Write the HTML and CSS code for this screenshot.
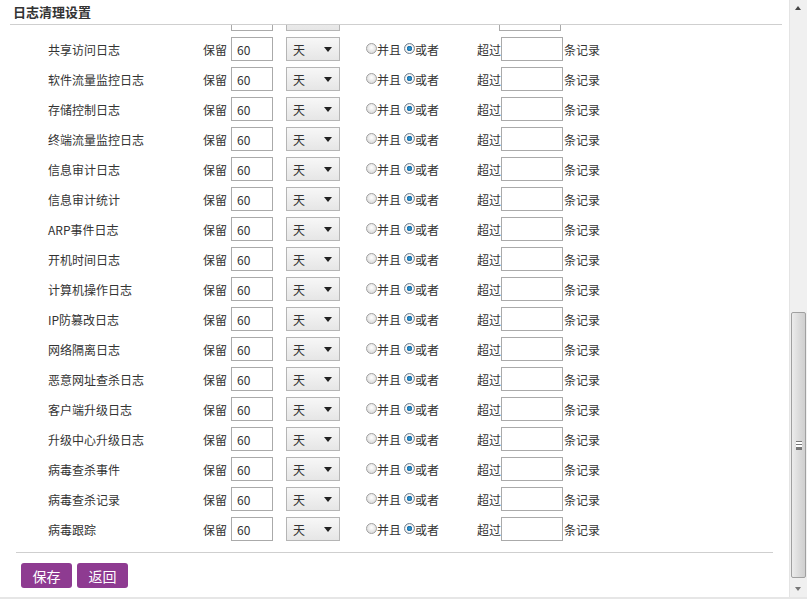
FILE: index.html
```html
<!DOCTYPE html>
<html lang="zh-CN">
<head>
    <meta charset="UTF-8">
    <title>日志清理设置</title>
    <link rel="stylesheet" href="styles.css">
</head>
<body>
    <div class="page">
        <div class="main">
            <div class="title">日志清理设置</div>
            <div class="list-box">
                <div class="list" id="logList">
                    <!-- 위로 스크롤되어 입력칸 아래쪽만 보이는 줄 -->
                    <div class="row scrolled">
                        <span class="name"></span>
                        <span class="keep"></span>
                        <input class="days" type="text">
                        <span class="unit"><select></select></span>
                        <span class="opt-space"></span>
                        <span class="over"></span>
                        <input class="count" type="text">
                    </div>
                </div>
            </div>
            <div class="divider"></div>
            <div class="actions">
                <button class="btn">保存</button>
                <button class="btn">返回</button>
            </div>
        </div>
        <div class="scrollbar">
            <div class="sb-btn sb-up"></div>
            <div class="sb-track">
                <div class="sb-thumb"><span class="grip"></span></div>
            </div>
            <div class="sb-btn sb-down"></div>
        </div>
    </div>

    <script>
        const logNames = [
            '共享访问日志',
            '软件流量监控日志',
            '存储控制日志',
            '终端流量监控日志',
            '信息审计日志',
            '信息审计统计',
            'ARP事件日志',
            '开机时间日志',
            '计算机操作日志',
            'IP防篡改日志',
            '网络隔离日志',
            '恶意网址查杀日志',
            '客户端升级日志',
            '升级中心升级日志',
            '病毒查杀事件',
            '病毒查杀记录',
            '病毒跟踪'
        ];
        const logList = document.getElementById('logList');

        logNames.forEach((name, i) => {
            const row = document.createElement('div');
            row.className = 'row';
            row.innerHTML = `
                <span class="name">${name}</span>
                <span class="keep">保留</span>
                <input class="days" type="text" value="60">
                <span class="unit"><select><option>天</option><option>月</option></select></span>
                <label class="opt"><input type="radio" name="mode${i}">并且</label>
                <label class="opt"><input type="radio" name="mode${i}" checked>或者</label>
                <span class="over">超过</span>
                <input class="count" type="text">
                <span class="suffix">条记录</span>`;
            logList.appendChild(row);
        });
    </script>
</body>
</html>
```

FILE: styles.css
```css
body {
    margin: 0;
    font-family: "Noto Sans CJK SC", "Liberation Sans", sans-serif;
    font-size: 12px;
    color: #333;
    background-color: #ffffff;
    overflow: hidden;
}
.page {
    display: flex;
    height: 597px;
    border-bottom: 2px solid #e6e6e6;
}
.main {
    flex: 1;
    display: flex;
    flex-direction: column;
    min-width: 0;
}
.title {
    height: 24px;
    line-height: 24px;
    margin: 0 7px 0 10px;
    padding-left: 3px;
    font-size: 13px;
    font-weight: bold;
    color: #333;
    border-bottom: 1px solid #cfcfcf;
}
.list-box {
    height: 519px;
    overflow: hidden;
}
.list {
    margin-top: -21px;
    padding-left: 48px;
}
.row {
    display: flex;
    align-items: center;
    height: 30px;
}
.opt-space {
    width: 74px;
}
.name {
    width: 155px;
}
.keep {
    width: 28px;
}
.row input[type="text"] {
    height: 24px;
    box-sizing: border-box;
    border: 1px solid #aaaaaa;
    font-family: inherit;
    font-size: 12px;
    color: #333;
    padding: 0 5px;
    outline: none;
}
.days {
    width: 42px;
    margin-right: 13px;
}
.unit {
    position: relative;
    width: 54px;
    height: 24px;
    margin-right: 26px;
}
.unit select {
    width: 54px;
    height: 24px;
    appearance: none;
    -webkit-appearance: none;
    border: 1px solid #b5b5b5;
    background: linear-gradient(#f7f7f7, #e6e6e6);
    font-family: inherit;
    font-size: 12px;
    color: #333;
    padding-left: 6px;
    outline: none;
}
.unit::after {
    content: "";
    position: absolute;
    top: 10px;
    left: 38px;
    border-left: 4px solid transparent;
    border-right: 4px solid transparent;
    border-top: 5px solid #222;
    pointer-events: none;
}
.scrolled .unit::after {
    display: none;
}
.opt {
    display: flex;
    align-items: center;
    margin-right: 3px;
}
.opt input {
    appearance: none;
    -webkit-appearance: none;
    width: 11px;
    height: 11px;
    margin: 0 0 2px 0;
    border-radius: 50%;
    border: 1px solid #a0a0a0;
    background: radial-gradient(circle at 50% 40%, #ffffff, #d0d0d0);
    box-sizing: border-box;
}
.opt input:checked {
    border-color: #6f7f8f;
    background: radial-gradient(circle, #2f9fd8 0, #1f6fa8 2.5px, #ffffff 3px, #d8d8d8 5px);
}
.over {
    margin-left: 35px;
    width: 24px;
}
.count {
    width: 62px;
}
.suffix {
    margin-left: 1px;
}
.divider {
    margin: 8px 16px 0 16px;
    width: 757px;
    border-top: 1px solid #cfcfcf;
}
.actions {
    display: flex;
    gap: 5px;
    padding: 10px 0 0 21px;
}
.btn {
    width: 51px;
    height: 25px;
    border: none;
    border-radius: 3px;
    background-color: #8e3b91;
    color: #ffffff;
    font-family: inherit;
    font-size: 14px;
    padding: 0;
    cursor: pointer;
}
.scrollbar {
    width: 17px;
    display: flex;
    flex-direction: column;
    background-color: #f0f0f0;
    border-left: 1px solid #e4e4e4;
}
.sb-btn {
    position: relative;
    height: 17px;
}
.sb-up::after,
.sb-down::after {
    content: "";
    position: absolute;
    left: 5px;
    border-left: 3px solid transparent;
    border-right: 3px solid transparent;
}
.sb-up::after {
    top: 6px;
    border-bottom: 4px solid #444;
}
.sb-down::after {
    top: 7px;
    border-top: 4px solid #777;
}
.sb-track {
    flex: 1;
    padding-top: 295px;
}
.sb-thumb {
    display: flex;
    align-items: center;
    justify-content: center;
    height: 266px;
    margin: 0 1px;
    box-sizing: border-box;
    border: 1px solid #a0a0a0;
    border-radius: 2px;
    background: linear-gradient(to right, #ececec, #d9d9d9 60%, #cfcfcf);
}
.grip {
    width: 6px;
    height: 7px;
    border-top: 1px solid #777;
    border-bottom: 1px solid #777;
    background: linear-gradient(#ffffff 2px, #777 2px, #777 3px, #ffffff 3px, #ffffff 5px, #777 5px);
}
```
